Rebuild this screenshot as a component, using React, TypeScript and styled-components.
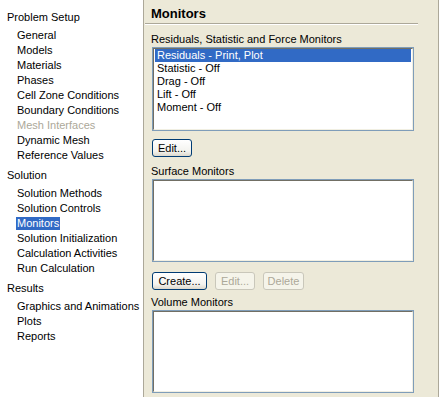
import React from "react";
import styled, { createGlobalStyle } from "styled-components";

const GlobalStyle = createGlobalStyle`
  html, body {
    margin: 0;
    padding: 0;
    background: #ffffff;
  }
  body {
    font-family: "Liberation Sans", Arial, sans-serif;
    font-size: 11px;
    color: #000;
  }
`;

const Window = styled.div`
  display: flex;
  width: 440px;
  height: 397px;
  background: #ffffff;
  overflow: hidden;
`;

const Sidebar = styled.div`
  width: 144px;
  flex-shrink: 0;
  padding-top: 10px;
  background: #ffffff;
  border-right: 1px solid #aca899;
  box-sizing: border-box;
`;

const Group = styled.div`
  margin-bottom: 5px;
`;

const GroupTitle = styled.div`
  height: 15px;
  line-height: 15px;
  padding-left: 7px;
  margin-bottom: 3px;
  white-space: nowrap;
`;

const Item = styled.div<{ $disabled?: boolean }>`
  height: 15px;
  line-height: 15px;
  padding-left: 17px;
  white-space: nowrap;
  color: ${(p) => (p.$disabled ? "#aca899" : "#000")};
`;

const Selected = styled.span`
  display: inline-block;
  line-height: 13px;
  padding: 0 1px;
  margin-left: -1px;
  background: #316ac5;
  color: #fff;
`;

const Main = styled.div`
  width: 294px;
  flex-shrink: 0;
  background: #ece9d8;
  border-right: 1px solid #aca899;
  display: flex;
  flex-direction: column;
`;

const Title = styled.div`
  height: 22px;
  line-height: 22px;
  padding: 3px 0 0 7px;
  box-sizing: border-box;
  font-weight: bold;
  font-size: 13px;
`;

const Rule = styled.div`
  margin: 1px 20px 0 1px;
  height: 1px;
  background: #aca899;
  border-bottom: 1px solid #ffffff;
`;

const Body = styled.div`
  display: flex;
  flex-direction: column;
  padding: 8px 0 0 8px;
`;

const Label = styled.div`
  height: 13px;
  line-height: 13px;
  margin-left: -1px;
  margin-bottom: 1px;
  white-space: nowrap;
`;

const ListBox = styled.div<{ $h: number }>`
  width: 262px;
  height: ${(p) => p.$h}px;
  box-sizing: border-box;
  border: 1px solid #7f9db9;
  background: #ffffff;
`;

const ListInner = styled.div`
  height: 100%;
  box-sizing: border-box;
  border-top: 1px solid #716f64;
  border-left: 1px solid #716f64;
  border-bottom: 1px solid #f1efe2;
  border-right: 1px solid #f1efe2;
  padding: 0 1px;
`;

const ListItem = styled.div<{ $active?: boolean }>`
  height: 13px;
  line-height: 13px;
  padding-left: 2px;
  white-space: nowrap;
  background: ${(p) => (p.$active ? "#316ac5" : "transparent")};
  color: ${(p) => (p.$active ? "#fff" : "#000")};
`;

const ButtonRow = styled.div<{ $top: number; $bottom: number }>`
  display: flex;
  gap: 8px;
  margin-top: ${(p) => p.$top}px;
  margin-bottom: ${(p) => p.$bottom}px;
`;

const Button = styled.button<{ $w: number }>`
  width: ${(p) => p.$w}px;
  height: 18px;
  padding: 0;
  box-sizing: border-box;
  font-family: "Liberation Sans", Arial, sans-serif;
  font-size: 11px;
  line-height: 16px;
  color: #000;
  border: 1px solid #003c74;
  border-radius: 3px;
  background: linear-gradient(#ffffff, #f3f3ef 70%, #dcd8cc);

  &:disabled {
    color: #aca899;
    border-color: #c9c7ba;
    background: #f5f4ea;
  }
`;

const setup = [
  "General",
  "Models",
  "Materials",
  "Phases",
  "Cell Zone Conditions",
  "Boundary Conditions",
];

export default function App() {
  return (
    <>
      <GlobalStyle />
      <Window>
        <Sidebar>
          <Group>
            <GroupTitle>Problem Setup</GroupTitle>
            {setup.map((s) => (
              <Item key={s}>{s}</Item>
            ))}
            <Item $disabled>Mesh Interfaces</Item>
            <Item>Dynamic Mesh</Item>
            <Item>Reference Values</Item>
          </Group>
          <Group>
            <GroupTitle>Solution</GroupTitle>
            <Item>Solution Methods</Item>
            <Item>Solution Controls</Item>
            <Item>
              <Selected>Monitors</Selected>
            </Item>
            <Item>Solution Initialization</Item>
            <Item>Calculation Activities</Item>
            <Item>Run Calculation</Item>
          </Group>
          <Group>
            <GroupTitle>Results</GroupTitle>
            <Item>Graphics and Animations</Item>
            <Item>Plots</Item>
            <Item>Reports</Item>
          </Group>
        </Sidebar>
        <Main>
          <Title>Monitors</Title>
          <Rule />
          <Body>
            <Label>Residuals, Statistic and Force Monitors</Label>
            <ListBox $h={84}>
              <ListInner>
                <ListItem $active>Residuals - Print, Plot</ListItem>
                <ListItem>Statistic - Off</ListItem>
                <ListItem>Drag - Off</ListItem>
                <ListItem>Lift - Off</ListItem>
                <ListItem>Moment - Off</ListItem>
              </ListInner>
            </ListBox>
            <ButtonRow $top={8} $bottom={8}>
              <Button $w={40}>Edit...</Button>
            </ButtonRow>
            <Label>Surface Monitors</Label>
            <ListBox $h={83}>
              <ListInner />
            </ListBox>
            <ButtonRow $top={10} $bottom={6}>
              <Button $w={55}>Create...</Button>
              <Button $w={40} disabled>
                Edit...
              </Button>
              <Button $w={41} disabled>
                Delete
              </Button>
            </ButtonRow>
            <Label>Volume Monitors</Label>
            <ListBox $h={83}>
              <ListInner />
            </ListBox>
          </Body>
        </Main>
      </Window>
    </>
  );
}
